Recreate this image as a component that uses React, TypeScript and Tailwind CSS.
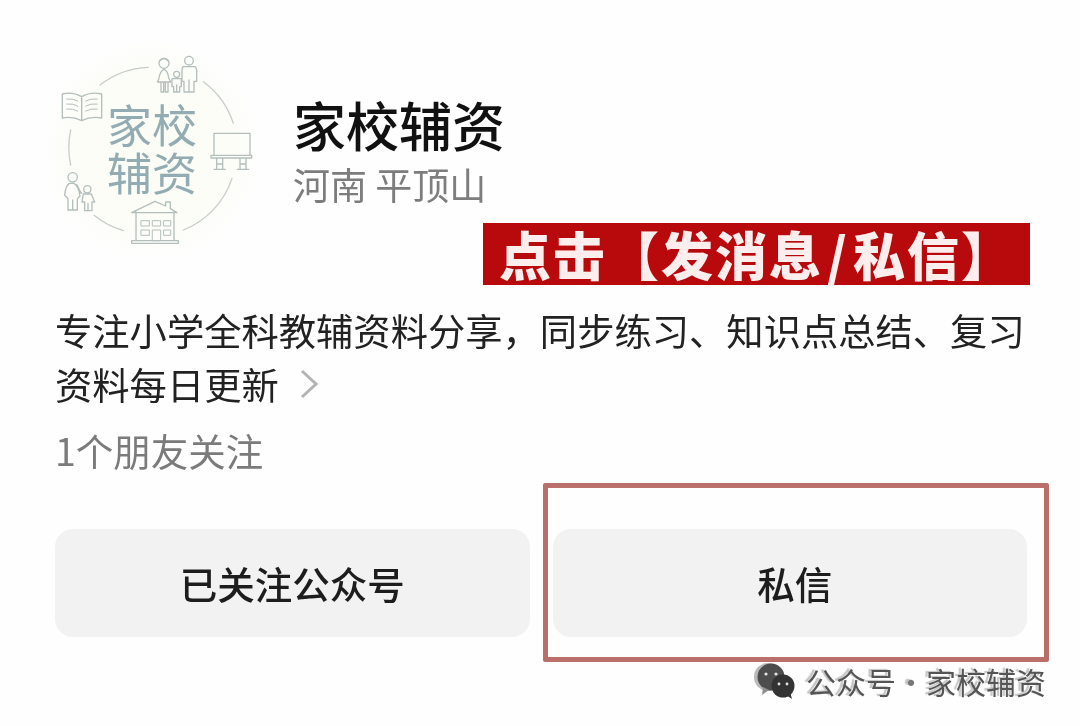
import React from 'react'

const CJK = "font-['Noto_Sans_CJK_SC','Noto_Sans',sans-serif]"

// drawn in zoomed coords (3x), so the viewBox is 750x720 for a 250x240 box
function AvatarArt() {
  return (
    <svg viewBox="0 0 750 720" className="absolute inset-0 w-full h-full" fill="none">
      <defs>
        <radialGradient id="glow">
          <stop offset="0%" stopColor="#fafcf5" />
          <stop offset="75%" stopColor="#fcfdf7" />
          <stop offset="100%" stopColor="#fefefe" />
        </radialGradient>
      </defs>
      <circle cx="365" cy="360" r="330" fill="url(#glow)" />

      {/* ring segments */}
      <g stroke="#c6cdcb" strokeWidth="4" strokeLinecap="round">
        <path d="M210 165A250 250 0 0 1 355 112" />
        <path d="M520 155A250 250 0 0 1 610 280" />
        <path d="M606 445A250 250 0 0 1 460 600" />
        <path d="M280 602A250 250 0 0 1 192 556" />
        <path d="M122 405A250 250 0 0 1 122 300" />
      </g>

      <g stroke="#b4bfbd" strokeWidth="4" strokeLinejoin="round" strokeLinecap="round">
        {/* family */}
        <circle cx="402" cy="100" r="15" />
        <path d="M390 92q12 -14 26 2M402 118q-12 4 -16 30l-4 8h40l-6 -12q-2 -22 -14 -26zM393 156v30h8v-30M406 156v30h8v-30" />
        <circle cx="477" cy="92" r="13" />
        <path d="M460 110h34q6 2 6 12v32h-8v32h-30v-32h-6v-32q0 -10 4 -12zM477 150v36" />
        <circle cx="440" cy="133" r="9" />
        <path d="M426 146h28v24h-5v16h-18v-16h-5zM440 165v21" />

        {/* open book */}
        <path d="M97 192q30 -8 58 8q28 -16 60 -8v72q-32 -6 -60 8q-28 -14 -58 -8zM155 200v72" />
        <path d="M110 207q20 -2 33 6M110 222q20 -2 33 6M110 237q20 -2 33 6M167 213q14 -8 35 -6M167 228q14 -8 35 -6M167 243q14 -8 35 -6" strokeWidth="3" />

        {/* board */}
        <path d="M552 310h108v66h-108zM543 376h122v8h-122zM560 384v34M578 384v34M630 384v34M648 384v34M552 418h34M622 418h34M560 402h18M630 402h18" />

        {/* parent and child */}
        <circle cx="128" cy="442" r="14" />
        <path d="M118 460q-12 8 -14 36l10 10v34h28v-34l8 -8q-4 -30 -18 -38zM128 510v30M140 464l14 26" />
        <circle cx="172" cy="478" r="11" />
        <path d="M160 492h24l10 24h-8v26h-22v-26h-8zM174 520v22" />

        {/* house */}
        <path d="M305 548l70 -34l32 14v-12h14v20l20 12M318 546v86M432 546v86M305 632h140v8h-140zM305 548h135" />
        <path d="M334 572h24v16h-24zM368 572h24v16h-24zM402 572h20v16h-20zM334 600h24v16h-24zM402 600h20v16h-20zM368 600h24v32h-24z" strokeWidth="3" />
      </g>
    </svg>
  )
}

function WechatMark() {
  return (
    <svg viewBox="0 0 48 40" className="w-12 h-10 shrink-0">
      <circle cx="18" cy="16" r="14" fill="#b9b9b9" />
      <circle cx="21" cy="16" r="13.5" fill="#4d4d4d" />
      <path d="M13 26l-1 8l7 -5z" fill="#8f8f8f" />
      <circle cx="33" cy="25" r="11.5" fill="#333333" />
      <path d="M36 34l6 4l-2 -7z" fill="#333333" />
      <circle cx="16" cy="13" r="1.6" fill="#e5e5e5" />
      <circle cx="26" cy="13" r="1.6" fill="#e5e5e5" />
      <circle cx="29" cy="23" r="1.4" fill="#e5e5e5" />
      <circle cx="37" cy="23" r="1.4" fill="#e5e5e5" />
    </svg>
  )
}

export default function App() {
  return (
    <div className={`${CJK} relative w-[1080px] h-[726px] overflow-hidden bg-[#fefefe] flex flex-col blur-[0.5px]`}>
      {/* profile header */}
      <div className="flex items-start pl-[30px] pt-[30px] h-[223px] shrink-0">
        <div className="relative w-[250px] h-[240px] shrink-0">
          <AvatarArt />
          <div className="absolute left-[76px] top-[70px] w-[92px] text-[45px] leading-[48px] text-[#93abb2] text-center">
            <div>家校</div>
            <div>辅资</div>
          </div>
        </div>
        <div className="ml-[13px] pt-[55px]">
          <div className="text-[53px] leading-[78px] font-medium text-[#111111] whitespace-nowrap">家校辅资</div>
          <div className="text-[37px] leading-[40px] mt-[1px] text-[#7d7d7d] whitespace-nowrap">河南 平顶山</div>
        </div>
      </div>

      {/* red banner */}
      <div className="ml-[483px] w-[547px] h-[62px] shrink-0 bg-[#b80a0c] flex items-center pl-[16px] text-[52px] tracking-[2px] leading-none font-black text-[#fdeeee] whitespace-nowrap">
        点击【发消息<span className="mx-[4px]">/</span>私信】
      </div>

      {/* bio */}
      <div className="px-[55px] mt-[18px] text-[37.3px] leading-[54px] text-[#222222]">
        <div className="whitespace-nowrap">专注小学全科教辅资料分享，同步练习、知识点总结、复习</div>
        <div className="flex items-center whitespace-nowrap">
          资料每日更新
          <svg viewBox="0 0 20 32" className="w-[20px] h-[32px] ml-[20px]" fill="none" stroke="#b3b3b3" strokeWidth="3">
            <path d="M3 3l14 13l-14 13" />
          </svg>
        </div>
      </div>
      <div className="px-[55px] mt-[12px] text-[37.5px] leading-[54px] text-[#7b7b7b] whitespace-nowrap">1个朋友关注</div>

      {/* actions */}
      <div className="relative ml-[55px] mt-[52px] w-[972px] grid grid-cols-2 gap-[23px]">
        <button className="h-[108px] rounded-[18px] bg-[#f2f2f2] text-[37.5px] font-medium text-[#1d1d1d] flex items-center justify-center">
          已关注公众号
        </button>
        <button className="h-[108px] rounded-[18px] bg-[#f2f2f2] pl-[10px] text-[37.5px] font-medium text-[#1d1d1d] flex items-center justify-center">
          私信
        </button>
        <div className="absolute left-[488px] top-[-46px] w-[506px] h-[179px] border-[5px] border-[#bb6f6b] rounded-[2px]" />
      </div>

      {/* watermark */}
      <div className="mt-[24px] pr-[34px] flex items-center justify-end text-[30px] leading-[40px] text-[#555555] whitespace-nowrap [text-shadow:-3px_-1px_1px_#c4c4c4]">
        <WechatMark />
        <span className="ml-[8px]">公众号</span>
        <span className="text-[#777777]">·</span>
        <span>家校辅资</span>
      </div>
    </div>
  )
}
